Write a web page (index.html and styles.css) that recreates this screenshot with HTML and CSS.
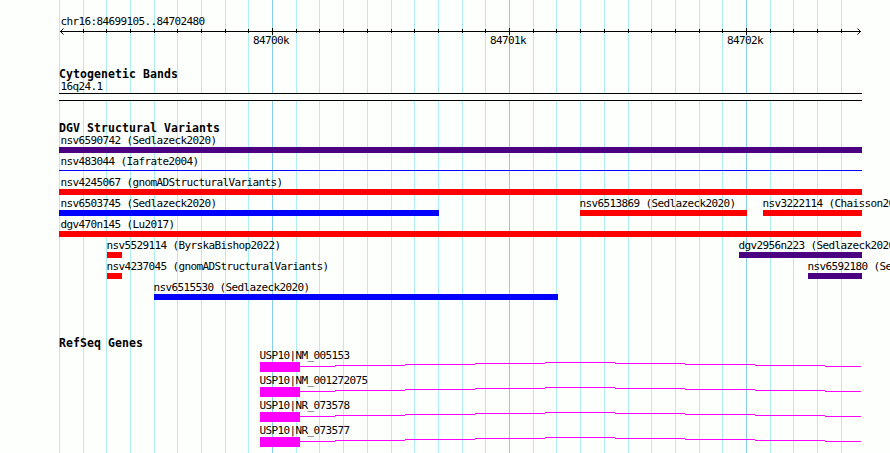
FILE: index.html
```
<!DOCTYPE html>
<html>
<head>
    <meta charset="UTF-8">
    <title>chr16:84699105..84702480</title>
    <link rel="stylesheet" href="styles.css">
</head>
<body>
    <div class="browser">
        <!-- Vertical grid, one line every 100 bp -->
        <svg class="grid" width="803" height="453">
            <path class="minor" d="M.5 0v453M24.5 0v453M47.5 0v453M71.5 0v453M95.5 0v453M118.5 0v453M142.5 0v453M166.5 0v453M189.5 0v453M237.5 0v453M260.5 0v453M284.5 0v453M308.5 0v453M332.5 0v453M355.5 0v453M379.5 0v453M403.5 0v453M426.5 0v453M474.5 0v453M497.5 0v453M521.5 0v453M545.5 0v453M569.5 0v453M592.5 0v453M616.5 0v453M640.5 0v453M663.5 0v453M711.5 0v453M734.5 0v453M758.5 0v453M782.5 0v453" />
            <path class="major" d="M213.5 0v453M450.5 0v453M687.5 0v453" />
        </svg>

        <!-- Ruler -->
        <div class="ruler">
            <div class="label first">chr16:84699105..84702480</div>
            <svg class="axis" width="803" height="7">
                <path d="M1 3.5h801M24.5 1v4M47.5 1v4M71.5 1v4M95.5 1v4M118.5 1v4M142.5 1v4M166.5 1v4M189.5 1v4M213.5 0v7M237.5 1v4M260.5 1v4M284.5 1v4M308.5 1v4M332.5 1v4M355.5 1v4M379.5 1v4M403.5 1v4M426.5 1v4M450.5 0v7M474.5 1v4M497.5 1v4M521.5 1v4M545.5 1v4M569.5 1v4M592.5 1v4M616.5 1v4M640.5 1v4M663.5 1v4M687.5 0v7M711.5 1v4M734.5 1v4M758.5 1v4M782.5 1v4" />
                <path d="M4.5 0.5l-3 3l3 3M798.5 0.5l3 3l-3 3" />
            </svg>
            <div class="row marks">
                <span class="label" style="margin-left: 194px">84700k</span>
                <span class="label" style="margin-left: 431px">84701k</span>
                <span class="label" style="margin-left: 668px">84702k</span>
            </div>
        </div>

        <!-- Cytogenetic Bands -->
        <div class="track bands">
            <div class="title">Cytogenetic Bands</div>
            <div class="label first">16q24.1</div>
            <div class="band"></div>
        </div>

        <!-- DGV Structural Variants -->
        <div class="track variants">
            <div class="title">DGV Structural Variants</div>
            <div class="row">
                <div class="feature">
                    <div class="label first">nsv6590742 (Sedlazeck2020)</div>
                    <div class="bar complex" style="width: 803px"></div>
                </div>
            </div>
            <div class="row">
                <div class="feature">
                    <div class="label first">nsv483044 (Iafrate2004)</div>
                    <div class="bar thin" style="width: 803px"></div>
                </div>
            </div>
            <div class="row">
                <div class="feature">
                    <div class="label first">nsv4245067 (gnomADStructuralVariants)</div>
                    <div class="bar loss" style="width: 803px"></div>
                </div>
            </div>
            <div class="row">
                <div class="feature">
                    <div class="label first">nsv6503745 (Sedlazeck2020)</div>
                    <div class="bar gain" style="width: 380px"></div>
                </div>
                <div class="feature" style="margin-left: 521px">
                    <div class="label">nsv6513869 (Sedlazeck2020)</div>
                    <div class="bar loss" style="width: 167px"></div>
                </div>
                <div class="feature" style="margin-left: 704px">
                    <div class="label">nsv3222114 (Chaisson2019)</div>
                    <div class="bar loss" style="width: 99px"></div>
                </div>
            </div>
            <div class="row">
                <div class="feature">
                    <div class="label first">dgv470n145 (Lu2017)</div>
                    <div class="bar loss" style="width: 802px"></div>
                </div>
            </div>
            <div class="row">
                <div class="feature" style="margin-left: 48px">
                    <div class="label">nsv5529114 (ByrskaBishop2022)</div>
                    <div class="bar loss" style="width: 15px"></div>
                </div>
                <div class="feature" style="margin-left: 680px">
                    <div class="label">dgv2956n223 (Sedlazeck2020)</div>
                    <div class="bar complex" style="width: 123px"></div>
                </div>
            </div>
            <div class="row">
                <div class="feature" style="margin-left: 48px">
                    <div class="label">nsv4237045 (gnomADStructuralVariants)</div>
                    <div class="bar loss" style="width: 15px"></div>
                </div>
                <div class="feature" style="margin-left: 749px">
                    <div class="label">nsv6592180 (Sedlazeck2020)</div>
                    <div class="bar complex" style="width: 54px"></div>
                </div>
            </div>
            <div class="row">
                <div class="feature" style="margin-left: 95px">
                    <div class="label">nsv6515530 (Sedlazeck2020)</div>
                    <div class="bar gain" style="width: 404px"></div>
                </div>
            </div>
        </div>

        <!-- RefSeq Genes: exon box followed by the intron line -->
        <div class="track genes">
            <div class="title">RefSeq Genes</div>
            <div class="gene" style="margin-left: 201px">
                <div class="label">USP10|NM_005153</div>
                <svg class="transcript" width="601" height="10">
                    <rect width="40" height="10" />
                    <path d="M40 4.5h35M75 3.5h70M145 2.5h70M215 1.5h70M285 .5h70M355 1.5h70M425 2.5h70M495 3.5h70M565 4.5h36" />
                </svg>
            </div>
            <div class="gene" style="margin-left: 201px">
                <div class="label">USP10|NM_001272075</div>
                <svg class="transcript" width="601" height="10">
                    <rect width="40" height="10" />
                    <path d="M40 4.5h35M75 3.5h70M145 2.5h70M215 1.5h70M285 .5h70M355 1.5h70M425 2.5h70M495 3.5h70M565 4.5h36" />
                </svg>
            </div>
            <div class="gene" style="margin-left: 201px">
                <div class="label">USP10|NR_073578</div>
                <svg class="transcript" width="601" height="10">
                    <rect width="40" height="10" />
                    <path d="M40 4.5h35M75 3.5h70M145 2.5h70M215 1.5h70M285 .5h70M355 1.5h70M425 2.5h70M495 3.5h70M565 4.5h36" />
                </svg>
            </div>
            <div class="gene" style="margin-left: 201px">
                <div class="label">USP10|NR_073577</div>
                <svg class="transcript" width="601" height="10">
                    <rect width="40" height="10" />
                    <path d="M40 4.5h35M75 3.5h70M145 2.5h70M215 1.5h70M285 .5h70M355 1.5h70M425 2.5h70M495 3.5h70M565 4.5h36" />
                </svg>
            </div>
        </div>
    </div>
</body>
</html>
```
FILE: styles.css
```
body {
    margin: 0;
    background-color: #fdfffc;
    color: #000;
    font-family: "DejaVu Sans Mono", "Liberation Mono", monospace;
    font-size: 11px;
    line-height: 13px;
}
.browser {
    position: relative;
    z-index: 0;
    box-sizing: border-box;
    width: 890px;
    height: 453px;
    padding: 15px 0 0 59px;
    overflow: hidden;
}
svg {
    display: block;
}
path {
    fill: none;
    stroke-width: 1;
}
/* the grid runs behind every track */
.grid {
    position: absolute;
    top: 0;
    left: 59px;
    z-index: -1;
}
.minor {
    stroke: #afeeee;
}
.major {
    stroke: #87ceeb;
}
.axis path {
    stroke: #000;
}
.label {
    height: 13px;
    margin-left: -0.5px;
    letter-spacing: -0.622px;
    white-space: nowrap;
}
/* label of a feature that starts at the left edge */
.label.first {
    margin-left: 1.5px;
}
.title {
    height: 12px;
    font-size: 11.5px;
    font-weight: bold;
    letter-spacing: 0.077px;
    white-space: nowrap;
}
/* features of a row share one cell and are shifted to their start */
.row {
    display: grid;
    grid-template-columns: 803px;
}
.row > * {
    grid-area: 1 / 1;
}
.marks {
    margin-top: -1px;
}
.bands {
    margin-top: 21px;
}
.band {
    width: 803px;
    height: 6px;
    border-top: 1px solid #000;
    border-bottom: 1px solid #000;
    background-color: #fdfffc;
}
.variants {
    margin-top: 21px;
}
.variants .row {
    height: 21px;
}
.bar {
    height: 6px;
}
.gain {
    background-color: #0000ff;
}
.loss {
    background-color: #ff0000;
}
.complex {
    background-color: #4b0082;
}
.thin {
    height: 1px;
    margin-top: 2px;
    background-color: #0000ff;
}
.genes {
    margin-top: 35px;
}
.gene {
    height: 25px;
}
.transcript {
    fill: #ff00ff;
    stroke: none;
}
.transcript path {
    stroke: #ff00ff;
}
```
